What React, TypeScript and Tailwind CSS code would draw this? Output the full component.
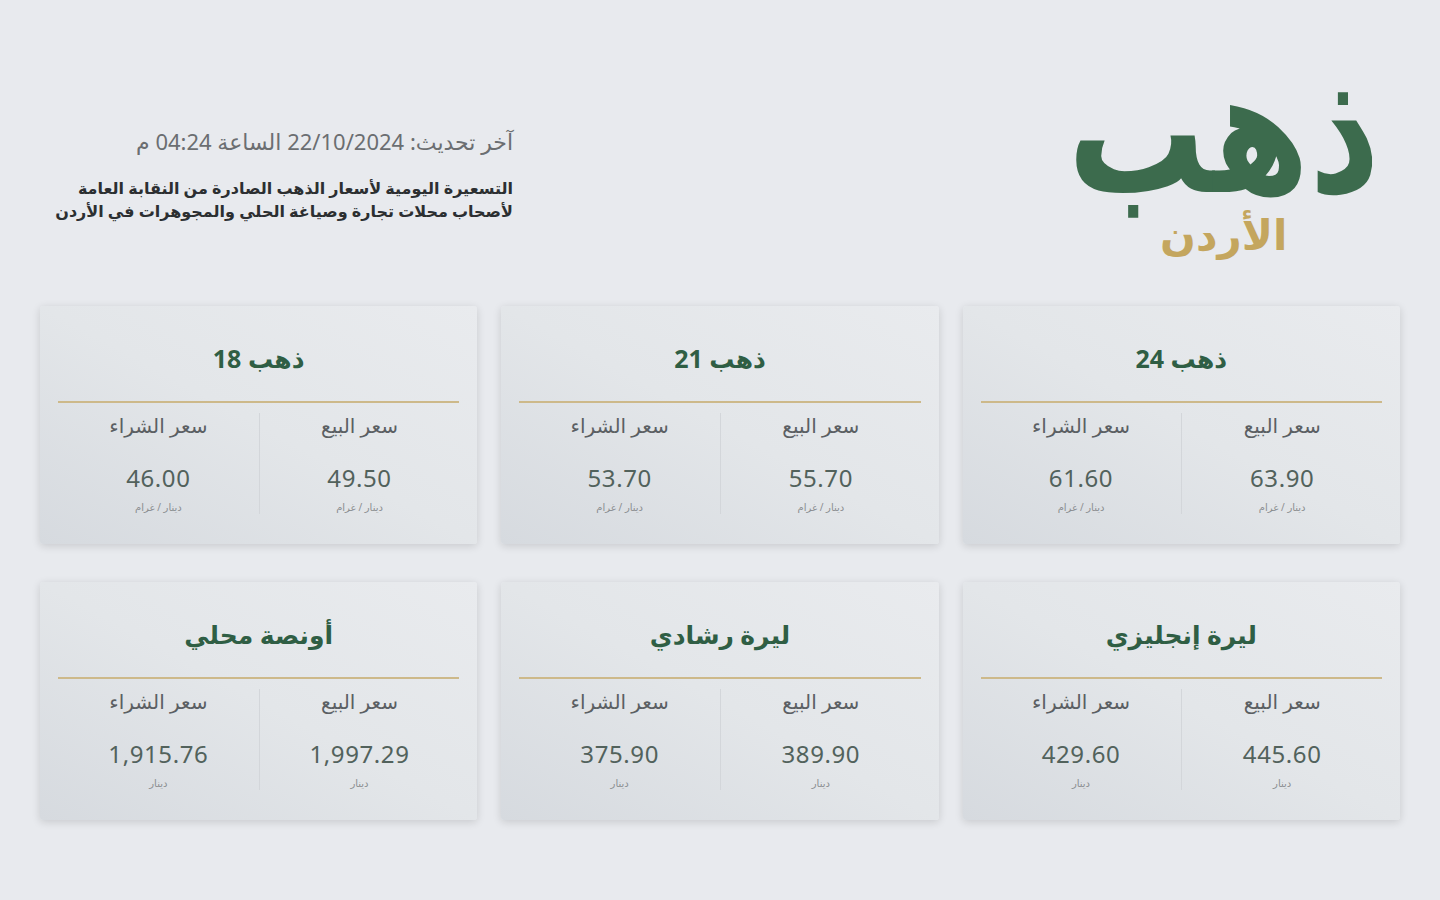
const prices = [
  { title: "ذهب 24", sell: "63.90", buy: "61.60", unit: "دينار / غرام" },
  { title: "ذهب 21", sell: "55.70", buy: "53.70", unit: "دينار / غرام" },
  { title: "ذهب 18", sell: "49.50", buy: "46.00", unit: "دينار / غرام" },
  { title: "ليرة إنجليزي", sell: "445.60", buy: "429.60", unit: "دينار" },
  { title: "ليرة رشادي", sell: "389.90", buy: "375.90", unit: "دينار" },
  { title: "أونصة محلي", sell: "1,997.29", buy: "1,915.76", unit: "دينار" },
];

const PriceCol = ({ label, value, unit }: { label: string; value: string; unit: string }) => {
  return (
    <div className="flex flex-col items-center">
      <span className="text-[20px] leading-[26px] text-[#5b5f63]">{label}</span>
      <span className="mt-[24px] text-[24px] leading-[30px] tracking-wide text-[#52625c]">{value}</span>
      <span className="mt-[7px] text-[10px] leading-[14px] text-[#8a8d90]">{unit}</span>
    </div>
  );
};

const App = () => {
  return (
    <div
      dir="rtl"
      className="min-h-[900px] w-full bg-[#e8eaee] px-10 font-['Noto_Sans','DejaVu_Sans',sans-serif]"
    >
      {/* Header */}
      <header className="flex h-[306px] items-start justify-between">
        <div className="mr-[20px] mt-[49px] flex flex-col items-center">
          <span className="block origin-top scale-y-125 text-[138px] font-bold leading-[120px] text-[#3c6b4d]">ذهب</span>
          <span className="mt-[40px] text-[42px] font-bold leading-[50px] text-[#c4a65e]">الأردن</span>
        </div>

        <div className="ml-[15px] mt-[126px] flex w-[458px] flex-col">
          <p className="text-[22px] leading-[30px] text-[#6b6e71]">آخر تحديث: 22/10/2024 الساعة 04:24 م</p>
          <p className="mt-[21px] text-[16px] font-bold leading-[23px] text-[#2c2f31]">
            التسعيرة اليومية لأسعار الذهب الصادرة من النقابة العامة
            <br />
            لأصحاب محلات تجارة وصياغة الحلي والمجوهرات في الأردن
          </p>
        </div>
      </header>

      {/* Cards */}
      <div className="grid grid-cols-3 gap-x-6 gap-y-[38px]">
        {prices.map((p) => (
          <div
            key={p.title}
            className="rounded-[3px] bg-gradient-to-bl from-[#e9ebee] via-[#e3e6e9] to-[#d6dadf] px-[18px] pb-[30px] pt-[37px] shadow-[0_2px_8px_rgba(0,0,0,0.14)]"
          >
            <h2 className="text-center text-[25px] font-bold leading-[30px] text-[#2f5e44]">{p.title}</h2>
            <div className="mt-[28px] h-[2px] bg-[#cdb98a]" />
            <div className="mt-[10px] grid grid-cols-2">
              <div className="border-l border-[#d3d6da]">
                <PriceCol label="سعر البيع" value={p.sell} unit={p.unit} />
              </div>
              <div>
                <PriceCol label="سعر الشراء" value={p.buy} unit={p.unit} />
              </div>
            </div>
          </div>
        ))}
      </div>
    </div>
  );
};

export default App;
